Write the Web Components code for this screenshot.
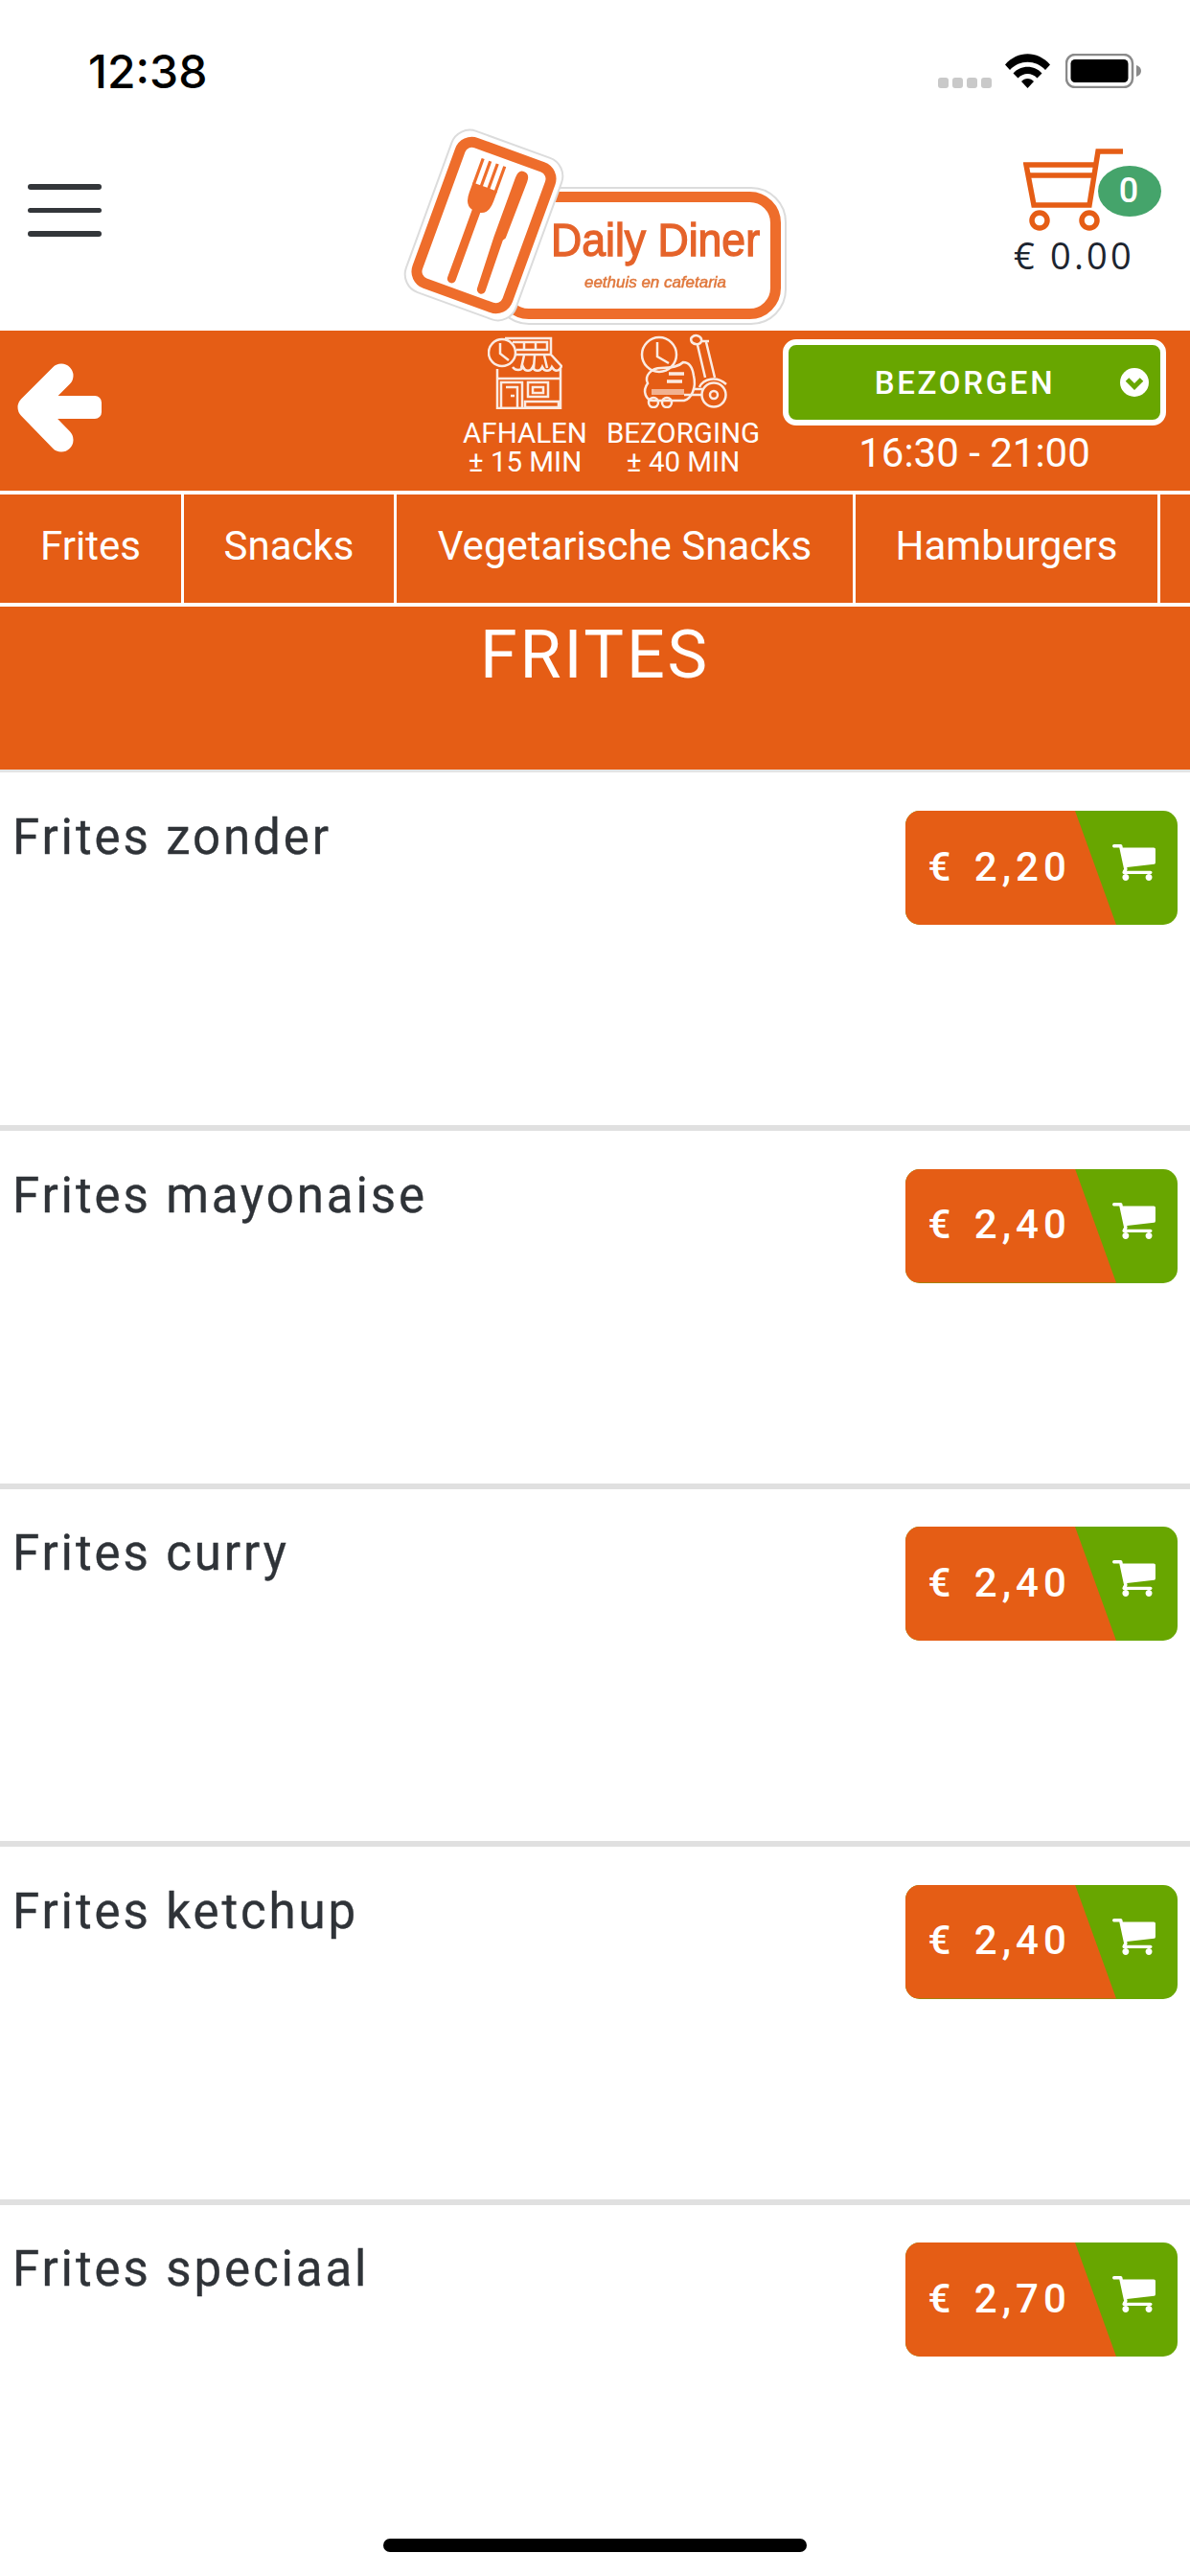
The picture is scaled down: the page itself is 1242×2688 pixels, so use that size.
<!DOCTYPE html>
<html lang="nl">
<head>
<meta charset="utf-8">
<title>Daily Diner</title>
<style>
  html,body{margin:0;padding:0;background:#fff;}
  body{width:1242px;height:2688px;overflow:hidden;font-family:Roboto,"Liberation Sans",sans-serif;position:relative;}
</style>
</head>
<body>
<status-bar></status-bar>
<app-header></app-header>
<delivery-bar></delivery-bar>
<cat-tabs>
  <cat-tab style="width:192px">Frites</cat-tab>
  <cat-tab style="width:222px">Snacks</cat-tab>
  <cat-tab style="width:479px">Vegetarische Snacks</cat-tab>
  <cat-tab style="width:318px">Hamburgers</cat-tab>
  <cat-tab style="width:100px"></cat-tab>
</cat-tabs>
<section-title>FRITES</section-title>
<menu-item><span>Frites zonder</span><span slot="price">€ 2,20</span></menu-item>
<menu-item><span>Frites mayonaise</span><span slot="price">€ 2,40</span></menu-item>
<menu-item><span>Frites curry</span><span slot="price">€ 2,40</span></menu-item>
<menu-item><span>Frites ketchup</span><span slot="price">€ 2,40</span></menu-item>
<menu-item><span>Frites speciaal</span><span slot="price">€ 2,70</span></menu-item>
<home-indicator></home-indicator>
<script>
const define=(name,html)=>customElements.define(name,class extends HTMLElement{
  constructor(){super();this.attachShadow({mode:'open'}).innerHTML=html;}
});
const CART='M704 1536q0 52-38 90t-90 38-90-38-38-90 38-90 90-38 90 38 38 90zm896 0q0 52-38 90t-90 38-90-38-38-90 38-90 90-38 90 38 38 90zm128-1088v512q0 24-16.5 42.5t-40.5 21.5l-1044 122q13 60 13 70 0 16-24 64h920q26 0 45 19t19 45-19 45-45 19h-1024q-26 0-45-19t-19-45q0-11 8-31.5t16-36 21.5-40 15.5-29.5l-177-823h-204q-26 0-45-19t-19-45 19-45 45-19h256q16 0 28.5 6.5t19.5 15.5 13 24.5 8 26 5.5 29.5 4.5 26h1201q26 0 45 19t19 45z';

define('status-bar',`<style>
:host{display:flex;height:125px;box-sizing:border-box;padding:57px 51px 0 92px;justify-content:space-between;align-items:flex-start;color:#000;}
.t{font:500 48px/36px Inter,Roboto,sans-serif;}
.r{display:flex;align-items:flex-start;margin-top:-1px;}
.dots{display:flex;gap:4px;margin-top:25px;margin-right:14px;}
.dots i{width:11px;height:11px;border-radius:3px;background:#c9c9c9;}
svg{display:block;}
</style>
<div class="t">12:38</div>
<div class="r">
<div class="dots"><i></i><i></i><i></i><i></i></div>
<svg width="47" height="36" viewBox="0 0 47 36" style="margin-right:16px"><path d="M0 11.5C13 -3.500 34 -3.500 47 11.500L42 17C32 6 15 6 5 17Z" fill="#000"/><path d="M8.500 20.500C16 11.500 31 11.500 38.500 20.500L33.500 25.500C28 19.500 19 19.500 13.500 25.500Z" fill="#000"/><path d="M17 29C20.500 25 26.500 25 30 29L23.500 36Z" fill="#000"/></svg>
<svg width="79" height="36" viewBox="0 0 79 36"><rect x="1" y="1" width="69" height="34" rx="9" fill="none" stroke="#8a8a8a" stroke-width="2.500"/><rect x="5.500" y="6" width="60" height="24" rx="4.500" fill="#000"/><path d="M74 12c3 1 5 3 5 6s-2 5-5 6z" fill="#8a8a8a"/></svg>
</div>`);

define('app-header',`<style>
:host{display:flex;height:220px;position:relative;justify-content:space-between;align-items:flex-start;}
.menu{margin:67px 0 0 29px;width:77px;display:flex;flex-direction:column;gap:19px;}
.menu i{height:5.500px;border-radius:3px;background:#33363a;}
.logo{position:absolute;left:400px;top:-5px;filter:blur(.6px);}
.cart{margin:28px 30px 0 0;width:154px;position:relative;display:flex;flex-direction:column;}
.cart svg{display:block;margin-left:10px;}
.badge{position:absolute;left:88px;top:20px;width:66px;height:53px;border-radius:50%;background:#45a46b;color:#fff;font:500 36px/53px Roboto,sans-serif;text-align:center;padding-right:2px;box-sizing:border-box;}
.sum{font:400 38px/44px "Open Sans",Roboto,sans-serif;color:#1d2530;letter-spacing:3.200px;margin-top:3px;white-space:nowrap;}
text{font-family:"Liberation Sans",Arial,sans-serif;}
</style>
<div class="menu"><i></i><i></i><i></i></div>
<svg class="logo" width="440" height="230" viewBox="400 120 440 230">
  <rect x="516" y="196" width="304" height="142" rx="36" fill="#fff" stroke="#dcdcdc" stroke-width="2"/>
  <rect x="525" y="205.500" width="284.500" height="122" rx="27" fill="#fff" stroke="#ee6d2b" stroke-width="11"/>
  <g transform="translate(505 235) rotate(20)">
    <rect x="-61" y="-89.500" width="122" height="179" rx="20" fill="#fff" stroke="#dcdcdc" stroke-width="2"/>
    <rect x="-50" y="-78" width="100" height="156" rx="13" fill="#fff" stroke="#ee6d2b" stroke-width="11"/>
    <g fill="#ee6d2b">
      <path d="M-26 -38H1V-27Q1 -13 -8 -11V64A4.500 4.500 0 0 1 -17 64V-11Q-26 -13 -26 -27Z"/>
      <path d="M14 8V-58Q14 -67 20 -67Q27 -67 27 -58L26 5L24 8L25 64A4.500 4.500 0 0 1 16 64Z"/>
    </g>
    <path d="M-24.500 -65V-36M-16.500 -65V-36M-8.500 -65V-36M-.5 -65V-36" stroke="#ee6d2b" stroke-width="3.200" fill="none"/>
  </g>
  <text x="575" y="267" font-size="48" fill="#e5632a" stroke="#e5632a" stroke-width="1.400" textLength="218" lengthAdjust="spacingAndGlyphs">Daily Diner</text>
  <text x="610" y="300" font-size="17" font-style="italic" fill="#e0773b" stroke="#e0773b" stroke-width=".5" textLength="148" lengthAdjust="spacingAndGlyphs">eethuis en cafetaria</text>
</svg>
<div class="cart">
  <svg width="106" height="88" viewBox="0 0 106 88"><g fill="none" stroke="#e55d15" stroke-width="5.500"><path d="M104 5H78L69 61H11L3 19H75"/><path d="M6 30H72"/><circle cx="17" cy="77" r="8"/><circle cx="69" cy="77" r="8"/></g></svg>
  <div class="badge">0</div>
  <div class="sum">€ 0.00</div>
</div>`);

define('delivery-bar',`<style>
:host{display:flex;height:167px;background:#e55d15;color:#fff;align-items:flex-start;}
.back{width:470px;padding:34px 0 0 18px;box-sizing:border-box;}
svg{display:block;}
.col{display:flex;flex-direction:column;align-items:center;font:400 29.500px/30px Roboto,sans-serif;white-space:nowrap;}
.c1{width:156px;} .c2{width:160px;margin-left:7px;}
.ic{height:92px;display:flex;align-items:flex-end;padding-bottom:10px;box-sizing:border-box;}
.c2 .ic{padding-bottom:11px;}
.ic svg{filter:blur(.4px);}
.sel{margin-left:24px;width:400px;margin-top:9px;display:flex;flex-direction:column;align-items:center;}
.box{width:400px;height:90px;box-sizing:border-box;border:6px solid #fff;border-radius:14px;background:#68a600;display:flex;align-items:center;justify-content:center;position:relative;font:500 33px/1 Roboto,sans-serif;letter-spacing:2.700px;padding-right:20px;}
.box svg{position:absolute;right:12px;top:24px;}
.time{font:400 42px/48px Roboto,sans-serif;margin-top:5px;}
</style>
<div class="back"><svg width="90" height="94" viewBox="0 0 90 94"><g fill="none" stroke="#fff" stroke-width="25" stroke-linecap="round" stroke-linejoin="round"><path d="M46 13 L13 46 L46 80"/></g><rect x="12" y="34" width="76" height="24" rx="7" fill="#fff"/></svg></div>
<div class="col c1"><div class="ic"><svg width="78" height="76" viewBox="0 0 78 76" fill="none" stroke="#fff" stroke-width="2.500" opacity=".88">
  <circle cx="15" cy="17" r="14"/><path d="M13 7V18L22 25"/>
  <path d="M18 2H66V18M26 6H62V14H30M38 6V14M50 6V14"/>
  <path d="M28 19H66L77 31C75 37 70 37 67 32C65 37 59 37 57 32C55 37 49 37 47 32C45 37 39 37 37 32C35 36 29 36 26 32"/>
  <path d="M38 20L35 33M49 20L48 33M59 20L62 33"/>
  <path d="M10 34V75H76V34M10 44H76"/>
  <path d="M14 48H36V75H14ZM19 53H31V75M24 62H28"/>
  <path d="M42 48H63V63H42ZM47 53H58V59H47ZM39 74H74V68H39Z"/>
</svg></div><div>AFHALEN</div><div>± 15 MIN</div></div>
<div class="col c2"><div class="ic"><svg width="91" height="78" viewBox="0 0 91 78" fill="none" stroke="#fff" stroke-width="2.500" opacity=".88">
  <circle cx="20" cy="22" r="18"/><path d="M18 9V24L30 31"/>
  <path d="M8 52C4 44 12 36 22 36C34 36 42 33 45 30C52 30 55 37 56 44C59 56 54 68 46 70H14C6 70 2 60 8 52Z"/>
  <path d="M30 42H46M28 50H44" stroke-width="3.500"/>
  <path d="M12 61H46" stroke-width="6" opacity=".6"/>
  <circle cx="14" cy="72" r="5"/><circle cx="28" cy="72" r="5"/>
  <circle cx="77" cy="64" r="12.500"/><circle cx="77" cy="64" r="4"/>
  <path d="M54 4C58 0 65 3 64 8C63 12 57 12 54 9C53 7 53 5 54 4ZM64 8H72"/>
  <path d="M60 12L68 46M69 9L78 46M56 58H65M46 64H64M62 56C66 47 80 44 90 53"/>
</svg></div><div>BEZORGING</div><div>± 40 MIN</div></div>
<div class="sel"><div class="box">BEZORGEN<svg width="30" height="30" viewBox="0 0 30 30"><circle cx="15" cy="15" r="15" fill="#fff"/><path d="M7.500 12L15 19.500L22.500 12" fill="none" stroke="#68a600" stroke-width="5"/></svg></div><div class="time">16:30 - 21:00</div></div>`);

define('cat-tabs',`<style>
:host{display:flex;height:121px;box-sizing:border-box;background:#e55d15;border-top:4px solid #fff;border-bottom:4px solid #fff;overflow:hidden;}
</style><slot></slot>`);

define('cat-tab',`<style>
:host{display:block;flex:none;box-sizing:border-box;border-right:3.500px solid #fff;height:100%;font:400 42px/108px Roboto,sans-serif;color:#fff;white-space:nowrap;text-align:center;}
</style><slot></slot>`);

define('section-title',`<style>
:host{display:block;height:170px;margin-bottom:3.500px;box-sizing:border-box;background:#e55d15;color:#fff;text-align:center;font:400 70px/100px Roboto,sans-serif;letter-spacing:2.800px;box-shadow:0 3px 0 #e4e4e4;}
</style><slot></slot>`);

define('menu-item',`<style>
:host{display:flex;justify-content:space-between;align-items:flex-start;height:373.500px;box-sizing:border-box;border-bottom:6px solid #e0e0e0;padding:39.500px 13px 0 13px;color:#2f3338;font:400 51px/56px Roboto,sans-serif;letter-spacing:2.900px;-webkit-text-stroke:.35px #2f3338;}
:host(:last-of-type){border-bottom:0;}
.btn{width:284px;height:119px;border-radius:15px;background:#68a600;position:relative;overflow:hidden;display:flex;align-items:center;flex:none;color:#fff;-webkit-text-stroke:0;}
.btn::before{content:"";position:absolute;inset:0;background:#e55d15;clip-path:polygon(0 0,177px 0,220px 100%,0 100%);}
.price{position:relative;padding:0 0 2px 23.500px;font:500 42px/1 Roboto,sans-serif;letter-spacing:5px;white-space:pre;word-spacing:4px;}
svg{position:absolute;left:216px;top:35px;}
</style>
<div class="name"><slot></slot></div>
<div class="btn"><div class="price"><slot name="price"></slot></div><svg width="45" height="38" viewBox="64 256 1664 1408"><path fill="#fff" d="${CART}"/></svg></div>`);

define('home-indicator',`<style>
:host{display:block;position:absolute;left:400px;top:2649px;width:442px;height:14px;border-radius:7px;background:#000;}
</style>`);
</script>
</body>
</html>
